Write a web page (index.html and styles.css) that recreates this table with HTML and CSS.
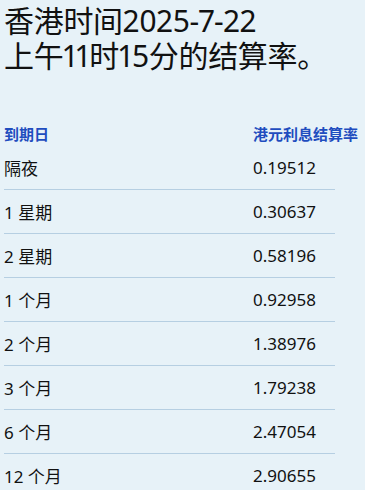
FILE: index.html
```html
<!DOCTYPE html>
<html lang="zh-CN">
<head>
<meta charset="utf-8">
<link rel="stylesheet" href="styles.css">
</head>
<body>
<h1 class="title">香港时间2025-7-22<br>上午11时15分的结算率。</h1>
<div class="table">
  <div class="head">
    <span>到期日</span>
    <span>港元利息结算率</span>
  </div>
  <div class="row"><span>隔夜</span><span>0.19512</span></div>
  <div class="row"><span>1 星期</span><span>0.30637</span></div>
  <div class="row"><span>2 星期</span><span>0.58196</span></div>
  <div class="row"><span>1 个月</span><span>0.92958</span></div>
  <div class="row"><span>2 个月</span><span>1.38976</span></div>
  <div class="row"><span>3 个月</span><span>1.79238</span></div>
  <div class="row"><span>6 个月</span><span>2.47054</span></div>
  <div class="row"><span>12 个月</span><span>2.90655</span></div>
</div>
</body>
</html>
```
FILE: styles.css
```css
html, body {
  margin: 0;
  padding: 0;
  background: #e7f2f8;
}
body {
  padding: 0 4px;
  font-family: "Noto Sans", "Noto Sans CJK SC", sans-serif;
  color: #111;
  overflow: hidden;
}
.title {
  margin: 3px 0 0;
  font-size: 30px;
  line-height: 35px;
  font-weight: 400;
  letter-spacing: -0.3px;
  font-variant-numeric: proportional-nums;
}
.table {
  margin-top: 48px;
}
.head {
  display: grid;
  grid-template-columns: 249px auto;
  height: 25px;
  align-items: center;
  font-size: 15px;
  font-weight: 700;
  color: #1f4dbf;
  white-space: nowrap;
}
.row {
  display: grid;
  grid-template-columns: 249px auto;
  width: 331px;
  height: 43px;
  align-items: center;
  border-bottom: 1px solid #b6cfe2;
  font-size: 17px;
}
```
